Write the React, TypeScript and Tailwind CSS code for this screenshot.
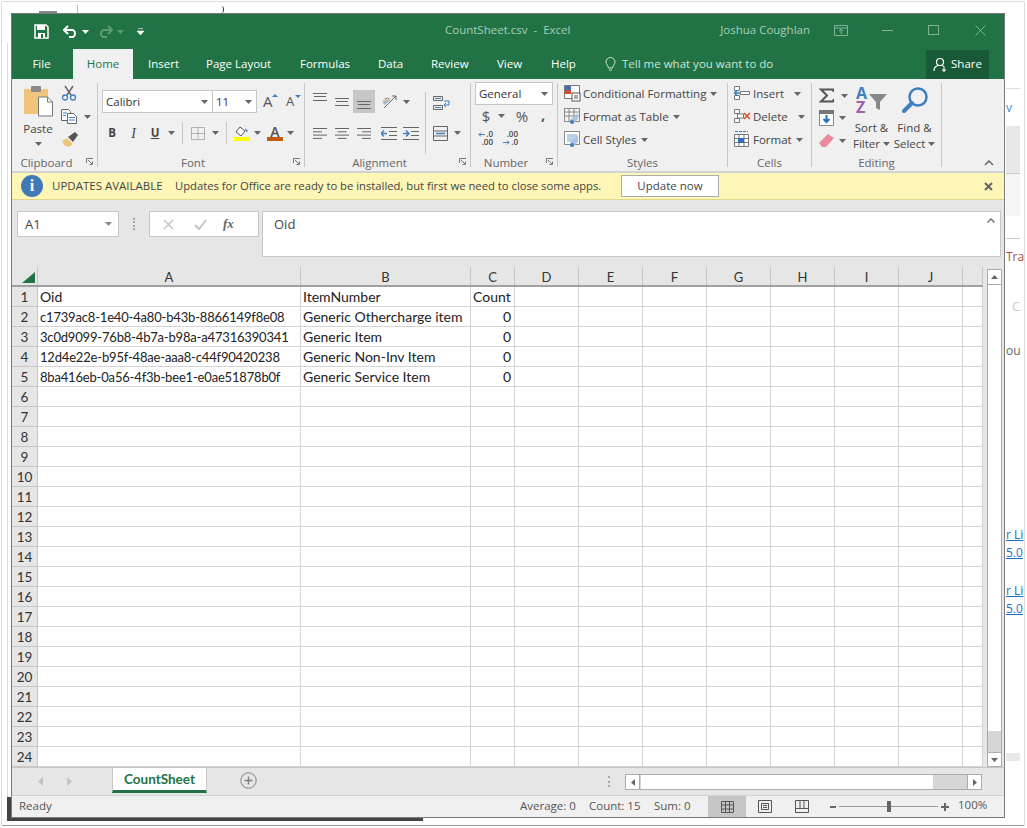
import type { ReactNode } from 'react'

const colWidths = [263, 170, 44, 64, 64, 64, 64, 64, 64, 64, 20]
const colNames = ['A', 'B', 'C', 'D', 'E', 'F', 'G', 'H', 'I', 'J', '']
const data = [
  ['Oid', 'ItemNumber', 'Count'],
  ['c1739ac8-1e40-4a80-b43b-8866149f8e08', 'Generic Othercharge item', '0'],
  ['3c0d9099-76b8-4b7a-b98a-a47316390341', 'Generic Item', '0'],
  ['12d4e22e-b95f-48ae-aaa8-c44f90420238', 'Generic Non-Inv Item', '0'],
  ['8ba416eb-0a56-4f3b-bee1-e0ae51878b0f', 'Generic Service Item', '0'],
]
const rows = Array.from({ length: 24 }, (_, i) => i + 1)

function Caret({ color = '#666', className = '' }: { color?: string; className?: string }) {
  return (
    <svg width="7" height="4" viewBox="0 0 7 4" className={className}>
      <path d="M0 0h7L3.5 4z" fill={color} />
    </svg>
  )
}

function Launcher() {
  return (
    <svg width="8" height="8" viewBox="0 0 8 8" className="shrink-0">
      <path d="M.5 5V.5H7M2 2l4 4M3.5 6.5h3v-3" fill="none" stroke="#777" />
    </svg>
  )
}

// three stacked lines for the vertical align buttons
function Lines() {
  return (
    <svg width="14" height="8" viewBox="0 0 14 8" className="block">
      <rect x="0" y="0" width="14" height="1" fill="#666" />
      <rect x="1" y="3" width="12" height="1" fill="#666" />
      <rect x="0" y="7" width="14" height="1" fill="#666" />
    </svg>
  )
}

function AlignH({ align }: { align: 'l' | 'c' | 'r' }) {
  const ws = [14, 9, 14, 9]
  return (
    <svg width="14" height="11" viewBox="0 0 14 11" className="block">
      {ws.map((w, i) => (
        <rect key={i} x={align === 'l' ? 0 : align === 'c' ? (14 - w) / 2 : 14 - w} y={i * 3.3} width={w} height="1" fill="#666" />
      ))}
    </svg>
  )
}

function SmallIcon({ children }: { children: ReactNode }) {
  return (
    <svg width="17" height="17" viewBox="0 0 17 17" className="shrink-0">
      {children}
    </svg>
  )
}

function StyleRow({ icon, label }: { icon: ReactNode; label: string }) {
  return (
    <div className="flex items-center h-[23px]">
      <div className="w-[19px]">{icon}</div>
      <span>{label}</span>
      <Caret className="ml-[4px]" />
    </div>
  )
}

function Group({ width, label, launcher, children }: { width: number; label: string; launcher?: boolean; children: ReactNode }) {
  return (
    <div className="flex flex-col h-[84px] border-r border-[#c6c6c6] shrink-0" style={{ width }}>
      <div className="h-[73px] flex">{children}</div>
      <div className={`h-[11px] relative flex items-center justify-center text-[11.5px] text-[#666] pt-[3px] ${launcher ? 'pr-[16px]' : ''}`}>
        {label}
        {launcher && (
          <span className="absolute right-[3px] top-[2px] flex">
            <Launcher />
          </span>
        )}
      </div>
    </div>
  )
}

function Ribbon() {
  return (
    <div className="h-[94px] bg-[#f0f0f0] border-b-2 border-[#d2d2d2] pt-[4px] flex text-[11.5px] text-[#444]">
      <Group width={86} label="Clipboard" launcher>
        <div className="w-[49px] flex flex-col items-center pl-[3px] pt-[3px]">
          <svg width="29" height="31" viewBox="0 0 29 31">
            <rect x="0" y="3" width="24" height="25" rx="1" fill="#efc57c" />
            <rect x="7" y="0" width="10" height="6" rx="1" fill="#8a8a8a" />
            <path d="M14.500 11h9l5 5v14h-14z" fill="#fff" stroke="#777" />
            <path d="M23.500 11v5h5" fill="none" stroke="#777" />
          </svg>
          <span className="mt-[4px] leading-[16px]">Paste</span>
          <Caret className="mt-[5px]" />
        </div>
        <div className="flex flex-col gap-[8px] pt-[2px]">
          <svg width="16" height="16" viewBox="0 0 16 16">
            <path d="M4 1l6 9M12 1L6 10" stroke="#666" strokeWidth="1.500" />
            <circle cx="4" cy="12.500" r="2.500" fill="none" stroke="#3f7fbf" strokeWidth="1.300" />
            <circle cx="12" cy="12.500" r="2.500" fill="none" stroke="#3f7fbf" strokeWidth="1.300" />
          </svg>
          <div className="flex items-center gap-[7px]">
            <svg width="16" height="15" viewBox="0 0 16 15">
              <path d="M.5.500h7l2 2v9h-9z" fill="#fff" stroke="#666" />
              <path d="M6.500 4.500h6l3 3v7h-9z" fill="#fff" stroke="#666" />
              <path d="M2 4h4M2 6.500h3M8 8.500h6M8 11h6" stroke="#3f7fbf" />
            </svg>
            <Caret />
          </div>
          <svg width="17" height="16" viewBox="0 0 17 16">
            <path d="M1 9l5-3 6 6-4 3-2-1-2 0z" fill="#efc57c" />
            <path d="M7 5l7-5 3 3-5 7z" fill="#555" />
          </svg>
        </div>
      </Group>

      <Group width={207} label="Font" launcher>
        <div className="pl-[4px] pt-[7px] flex flex-col">
          <div className="flex items-center h-[23px]">
            <div className="w-[111px] h-[23px] bg-white border border-[#c6c6c6] flex items-center justify-between px-[3px] text-[#333]">
              <span>Calibri</span>
              <Caret className="mr-[1px]" />
            </div>
            <div className="w-[44px] h-[23px] bg-white border border-l-0 border-[#c6c6c6] flex items-center justify-between px-[3px] text-[#333]">
              <span>11</span>
              <Caret className="mr-[1px]" />
            </div>
            <div className="relative ml-[6px] w-[14px] text-[15px] leading-none text-[#555] font-medium">
              A
              <svg width="6" height="3" viewBox="0 0 6 3" className="absolute -right-[1px] top-0">
                <path d="M0 3h6L3 0z" fill="#3f7fbf" />
              </svg>
            </div>
            <div className="relative ml-[9px] w-[14px] text-[13px] leading-none text-[#555] font-medium">
              A
              <svg width="6" height="3" viewBox="0 0 6 3" className="absolute -right-[1px] top-0">
                <path d="M0 0h6L3 3z" fill="#3f7fbf" />
              </svg>
            </div>
          </div>
          <div className="flex items-center h-[24px] mt-[8px]">
            <span className="w-[24px] ml-[-2px] text-center font-bold">B</span>
            <span className="w-[19px] text-center italic" style={{ fontFamily: '"Liberation Serif", serif', fontSize: 14 }}>I</span>
            <span className="w-[24px] text-center font-bold underline">U</span>
            <Caret className="ml-[1px]" />
            <div className="w-px h-[22px] bg-[#c6c6c6] ml-[7px]" />
            <svg width="14" height="13" viewBox="0 0 14 13" className="ml-[8px]">
              <path d="M.5.500h13v12h-13zM7 .500v12M.5 6.500h13" fill="none" stroke="#777" strokeDasharray="1 1" />
            </svg>
            <Caret className="ml-[7px]" />
            <div className="w-px h-[22px] bg-[#c6c6c6] ml-[7px]" />
            <div className="ml-[7px] flex flex-col items-center w-[16px]">
              <svg width="14" height="11" viewBox="0 0 14 11">
                <path d="M5 1l5 4-4 5-5-4z" fill="#fff" stroke="#555" />
                <path d="M10 2l3 3-2 1z" fill="#3f7fbf" />
              </svg>
              <div className="w-[16px] h-[4px] bg-[#ffff00]" />
            </div>
            <Caret className="ml-[4px]" />
            <div className="ml-[6px] flex flex-col items-center w-[16px]">
              <span className="text-[14px] leading-[11px] font-semibold text-[#555]">A</span>
              <div className="w-[16px] h-[4px] bg-[#c55a11]" />
            </div>
            <Caret className="ml-[4px]" />
          </div>
        </div>
      </Group>

      <Group width={166} label="Alignment" launcher>
        <div className="pl-[8px] pt-[7px] flex">
          <div className="flex flex-col">
            <div className="flex items-start h-[23px]">
              <div className="w-[22px] pt-[3px]"><Lines /></div>
              <div className="w-[18px] pt-[8px]"><Lines /></div>
              <div className="w-[22px] h-[23px] bg-[#c6c6c6] flex items-end justify-center pb-[4px]"><Lines /></div>
              <svg width="17" height="16" viewBox="0 0 17 16" className="ml-[6px] mt-[3px]">
                <text x="1" y="10" fontSize="7" fill="#555" transform="rotate(-40 5 8)">ab</text>
                <path d="M3 15L15 3M15 3h-4M15 3v4" fill="none" stroke="#666" />
              </svg>
              <Caret className="ml-[5px] mt-[10px]" />
            </div>
            <div className="flex items-center h-[24px] mt-[8px]">
              <div className="w-[22px]"><AlignH align="l" /></div>
              <div className="w-[22px]"><AlignH align="c" /></div>
              <div className="w-[24px]"><AlignH align="r" /></div>
              <svg width="16" height="13" viewBox="0 0 16 13">
                <path d="M0 .5h16M8 4.500h8M8 8.500h8M0 12.500h16" stroke="#666" />
                <path d="M6 6.500H0M3 3.500L0 6.500l3 3" fill="none" stroke="#3f7fbf" strokeWidth="1.500" />
              </svg>
              <svg width="16" height="13" viewBox="0 0 16 13" className="ml-[6px]">
                <path d="M0 .5h16M8 4.500h8M8 8.500h8M0 12.500h16" stroke="#666" />
                <path d="M0 6.500h6M3 3.500l3 3-3 3" fill="none" stroke="#3f7fbf" strokeWidth="1.500" />
              </svg>
            </div>
          </div>
          <div className="w-px h-[62px] bg-[#c6c6c6] ml-[6px] mt-[2px]" />
          <div className="flex flex-col pl-[7px]">
            <div className="h-[23px] flex items-center pt-[3px]">
              <svg width="17" height="16" viewBox="0 0 17 16">
                <path d="M.5 1.500h9v4h-9zM.5 10.500h9v4h-9z" fill="none" stroke="#666" />
                <path d="M2 3.500h6M2 12.500h6" stroke="#3f7fbf" />
                <path d="M11 6h5v4h-5M13 8l-2 2 2 2" fill="none" stroke="#3f7fbf" />
              </svg>
            </div>
            <div className="h-[24px] mt-[8px] flex items-center">
              <svg width="15" height="15" viewBox="0 0 15 15">
                <path d="M.5.500h14v14H.5zM.5 5h14M.5 10h14" fill="none" stroke="#666" />
                <path d="M3 7.500h9" stroke="#3f7fbf" strokeWidth="1.500" />
              </svg>
              <Caret className="ml-[6px]" />
            </div>
          </div>
        </div>
      </Group>

      <Group width={87} label="Number" launcher>
        <div className="pl-[4px] flex flex-col -mt-[1px]">
          <div className="w-[78px] h-[23px] bg-white border border-[#c6c6c6] flex items-center justify-between px-[3px] text-[#333]">
            <span>General</span>
            <Caret className="mr-[1px]" />
          </div>
          <div className="flex items-center h-[22px] text-[15px] text-[#555]">
            <span className="w-[10px] ml-[6px] text-center">$</span>
            <Caret className="ml-[7px]" />
            <span className="ml-[9px] w-[16px] text-center">%</span>
            <span className="ml-[11px] font-bold leading-[10px] h-[14px]">,</span>
          </div>
          <div className="flex items-center h-[22px] text-[8px] leading-[8px] text-[#444] font-semibold">
            <div className="ml-[3px] w-[15px] flex flex-col items-end">
              <div className="flex items-center gap-[1px]">
                <svg width="7" height="5" viewBox="0 0 7 5"><path d="M7 2.500H1M3 .5L1 2.500l2 2" fill="none" stroke="#3f7fbf" /></svg>
                <span>.0</span>
              </div>
              <span>.00</span>
            </div>
            <div className="ml-[10px] w-[15px] flex flex-col items-end">
              <span>.00</span>
              <div className="flex items-center gap-[1px]">
                <svg width="7" height="5" viewBox="0 0 7 5"><path d="M0 2.500h6M4 .5l2 2-2 2" fill="none" stroke="#3f7fbf" /></svg>
                <span>.0</span>
              </div>
            </div>
          </div>
        </div>
      </Group>

      <Group width={170} label="Styles">
        <div className="pl-[6px] flex flex-col -mt-[1px]">
          <StyleRow
            label="Conditional Formatting"
            icon={
              <SmallIcon>
                <path d="M.5.500h15v13H.5z" fill="#fff" stroke="#777" />
                <rect x="1" y="1" width="6" height="4" fill="#3f6fb5" />
                <rect x="1" y="5" width="6" height="4" fill="#d2502d" />
                <rect x="8" y="8" width="8" height="8" fill="#fff" stroke="#555" />
                <path d="M10 11h4M10 13h4" stroke="#555" />
              </SmallIcon>
            }
          />
          <StyleRow
            label="Format as Table"
            icon={
              <SmallIcon>
                <path d="M.5.500h15v13H.5zM.5 4h15M.5 8h15M5 .500v13M10 .500v13" fill="#f4f4f4" stroke="#888" />
                <path d="M6 12l8-7v6l-5 5z" fill="#a9c4e4" />
                <circle cx="8" cy="14" r="2" fill="#3f7fbf" />
              </SmallIcon>
            }
          />
          <StyleRow
            label="Cell Styles"
            icon={
              <SmallIcon>
                <path d="M.5.500h15v13H.5z" fill="#fff" stroke="#888" />
                <rect x="3" y="3" width="10" height="8" fill="#bcd0e8" />
                <path d="M6 12l8-8v7l-5 5z" fill="#a9c4e4" />
                <circle cx="8" cy="14" r="2" fill="#3f7fbf" />
              </SmallIcon>
            }
          />
        </div>
      </Group>

      <Group width={84} label="Cells">
        <div className="pl-[6px] flex flex-col -mt-[1px]">
          <div className="flex items-center h-[23px]">
            <div className="w-[19px]">
              <SmallIcon>
                <path d="M.5 1.500h5v4h-5zM.5 10.500h5v4h-5zM6.500 6.500h9v3h-9z" fill="#fff" stroke="#777" />
                <path d="M0 8h6M3 5.500L.5 8 3 10.500" fill="none" stroke="#3f7fbf" strokeWidth="1.300" />
              </SmallIcon>
            </div>
            <span>Insert</span>
            <Caret className="ml-[10px]" />
          </div>
          <div className="flex items-center h-[23px]">
            <div className="w-[19px]">
              <SmallIcon>
                <path d="M.5 1.500h5v4h-5zM.5 10.500h5v4h-5zM3.500 6h6v4h-6z" fill="#fff" stroke="#777" />
                <path d="M10 5l6 6M16 5l-6 6" stroke="#d2502d" strokeWidth="1.500" />
              </SmallIcon>
            </div>
            <span>Delete</span>
            <Caret className="ml-[10px]" />
          </div>
          <div className="flex items-center h-[23px]">
            <div className="w-[19px]">
              <SmallIcon>
                <path d="M1 .500h13" stroke="#3f7fbf" strokeDasharray="3 1" />
                <path d="M.5 3.500h14v12H.5zM.5 7.500h14M.5 11.500h14M5 3.500v12M10 3.500v12" fill="#fff" stroke="#777" />
                <rect x="4" y="7" width="6" height="5" fill="#2f6fb5" />
              </SmallIcon>
            </div>
            <span>Format</span>
            <Caret className="ml-[4px]" />
          </div>
        </div>
      </Group>

      <Group width={130} label="Editing">
        <div className="pl-[7px] flex">
          <div className="flex flex-col w-[36px]">
            <div className="flex items-center h-[23px] pt-[2px]">
              <svg width="15" height="15" viewBox="0 0 15 15">
                <path d="M14.500 4V1.500H2L8 7.500 2 13.500h12.500V11" fill="none" stroke="#555" strokeWidth="2" />
              </svg>
              <Caret className="ml-[7px]" />
            </div>
            <div className="flex items-center h-[23px]">
              <svg width="15" height="16" viewBox="0 0 15 16">
                <path d="M.5.500h14v15H.5z" fill="#fff" stroke="#888" />
                <rect x="0" y="0" width="15" height="4" fill="#777" />
                <path d="M7.500 5v7M4.500 9l3 3 3-3" fill="none" stroke="#2f6fb5" strokeWidth="2" />
              </svg>
              <Caret className="ml-[5px]" />
            </div>
            <div className="flex items-center h-[23px]">
              <svg width="15" height="13" viewBox="0 0 15 13">
                <path d="M0 9l9-9 6 4-8 9H3z" fill="#ea8a9c" />
              </svg>
              <Caret className="ml-[5px]" />
            </div>
          </div>
          <div className="flex flex-col items-center w-[33px] whitespace-nowrap">
            <div className="h-[32px] pt-[3px] flex items-start">
              <div className="flex flex-col text-[16px] font-bold leading-[14px] w-[13px]">
                <span className="text-[#3f7fbf]">A</span>
                <span className="text-[#9a62b3]">Z</span>
              </div>
              <svg width="18" height="17" viewBox="0 0 18 17" className="mt-[7px]">
                <path d="M0 1h18l-7 8v8l-4-2V9z" fill="#888" />
              </svg>
            </div>
            <span className="leading-[16px] mt-[5px]">Sort &amp;</span>
            <span className="leading-[16px] flex items-center">
              Filter
              <Caret className="ml-[3px]" />
            </span>
          </div>
          <div className="flex flex-col items-center w-[53px] whitespace-nowrap">
            <div className="h-[32px] pt-[3px]">
              <svg width="28" height="28" viewBox="0 0 28 28">
                <circle cx="17" cy="11" r="8.500" fill="none" stroke="#3f7fbf" strokeWidth="2.500" />
                <path d="M11 17L3 25" stroke="#3f7fbf" strokeWidth="4" strokeLinecap="round" />
              </svg>
            </div>
            <span className="leading-[16px] mt-[5px]">Find &amp;</span>
            <span className="leading-[16px] flex items-center">
              Select
              <Caret className="ml-[3px]" />
            </span>
          </div>
        </div>
      </Group>

      <div className="flex-1 flex justify-end items-end pr-[10px] pb-[5px]">
        <svg width="10" height="6" viewBox="0 0 10 6">
          <path d="M1 5l4-4 4 4" fill="none" stroke="#666" strokeWidth="1.500" />
        </svg>
      </div>
    </div>
  )
}

function Chrome() {
  const tabs: [string, number][] = [
    ['Insert', 58],
    ['Page Layout', 94],
    ['Formulas', 78],
    ['Data', 53],
    ['Review', 66],
    ['View', 54],
    ['Help', 54],
  ]
  return (
    <div className="bg-[#217346] text-white">
      <div className="h-[35px] flex items-center relative">
        <svg width="15" height="15" viewBox="0 0 15 15" className="ml-[22px]">
          <path d="M1 1h11l2 2v11H1z" fill="none" stroke="#fff" strokeWidth="1.500" />
          <path d="M3 1h8v5H3zM4 9h7v5H4z" fill="#fff" />
          <rect x="7" y="10" width="2" height="4" fill="#217346" />
        </svg>
        <svg width="15" height="13" viewBox="0 0 15 13" className="ml-[14px]">
          <path d="M1 5h9a4 4 0 010 7H6M5 1L1 5l4 4" fill="none" stroke="#fff" strokeWidth="2" />
        </svg>
        <Caret color="#fff" className="ml-[4px]" />
        <svg width="15" height="13" viewBox="0 0 15 13" className="ml-[9px]">
          <path d="M14 5H5a4 4 0 000 7h4M10 1l4 4-4 4" fill="none" stroke="#5d9b78" strokeWidth="2" />
        </svg>
        <Caret color="#5d9b78" className="ml-[4px]" />
        <svg width="7" height="7" viewBox="0 0 7 7" className="ml-[13px]">
          <path d="M1 .5h5M0 3h7L3.500 7z" fill="#fff" stroke="#fff" strokeWidth=".6" />
        </svg>
        <div className="absolute left-[433px] top-[8px] text-[11.5px] leading-[16px] text-[#a8cdb8] whitespace-pre">
          CountSheet.csv  -  Excel
        </div>
        <div className="ml-auto flex items-center text-[11.5px] text-[#a8cdb8] -mt-[3px]">
          <span>Joshua Coughlan</span>
          <svg width="14" height="11" viewBox="0 0 14 11" className="ml-[24px]">
            <path d="M.5.500h13v10H.5zM.5 3h13M7 9V4.500M5 6l2-2 2 2" fill="none" stroke="#7fb398" />
          </svg>
          <div className="ml-[34px] w-[11px] h-px bg-[#7fb398]" />
          <div className="ml-[35px] w-[11px] h-[10px] border border-[#7fb398]" />
          <svg width="11" height="11" viewBox="0 0 11 11" className="ml-[36px] mr-[18px]">
            <path d="M.5.500l10 10M10.500.500l-10 10" stroke="#7fb398" />
          </svg>
        </div>
      </div>
      <div className="h-[30px] flex items-center text-[11.5px]">
        <span className="w-[61px] text-center pr-[2px]">File</span>
        <span className="w-[60px] h-[30px] bg-[#f0f0f0] text-[#217346] flex items-center justify-center">Home</span>
        <div className="w-[15px]" />
        {tabs.map(([t, w]) => (
          <span key={t} className="shrink-0" style={{ width: w }}>{t}</span>
        ))}
        <svg width="11" height="15" viewBox="0 0 11 15" className="shrink-0">
          <path d="M3.500 11C3 8 1 7.500 1 5a4.500 4.500 0 019 0c0 2.500-2 3-2.500 6zM4 13h3" fill="none" stroke="#cfe3d7" />
        </svg>
        <span className="ml-[6px] text-[#cfe3d7]">Tell me what you want to do</span>
        <div className="ml-auto mr-[15px] w-[63px] h-[29px] bg-[#185a37] flex items-center justify-center gap-[3px]">
          <svg width="15" height="15" viewBox="0 0 15 15">
            <circle cx="7" cy="5" r="3.500" fill="none" stroke="#fff" strokeWidth="1.200" />
            <path d="M1 14c0-3 2-5 4-5.500M9 8.500c1 .3 2 1 2.500 2M11 11v4M9 13h4" fill="none" stroke="#fff" strokeWidth="1.200" />
          </svg>
          <span>Share</span>
        </div>
      </div>
    </div>
  )
}

function UpdateBar() {
  return (
    <div className="h-[27px] bg-[#fdf6b7] border-b border-[#dfd98d] flex items-center text-[11.5px] text-[#444] pl-[9px]">
      <div className="w-[22px] h-[22px] rounded-full bg-[#4079b5] flex items-center justify-center text-white text-[16px] font-bold" style={{ fontFamily: '"Liberation Serif", serif' }}>
        i
      </div>
      <span className="ml-[9px] w-[123px] font-medium whitespace-nowrap">UPDATES AVAILABLE</span>
      <span className="w-[446px] whitespace-nowrap text-[11.25px]">Updates for Office are ready to be installed, but first we need to close some apps.</span>
      <div className="w-[98px] h-[22px] bg-white border border-[#ababab] flex items-center justify-center">Update now</div>
      <svg width="9" height="9" viewBox="0 0 9 9" className="ml-auto mr-[11px]">
        <path d="M1 1l7 7M8 1L1 8" stroke="#666" strokeWidth="2" />
      </svg>
    </div>
  )
}

function FormulaBar() {
  return (
    <div className="h-[67px] bg-[#e6e6e6] flex items-start pt-[11px] pl-[5px] text-[#444]">
      <div className="w-[102px] h-[26px] bg-white border border-[#c6c6c6] flex items-center justify-between pl-[7px] pr-[6px] text-[13px]">
        <span className="pt-[2px]">A1</span>
        <Caret color="#888" />
      </div>
      <div className="w-[2px] h-[12px] ml-[14px] mt-[7px] border-l-2 border-dotted border-[#aaa]" />
      <div className="ml-[14px] w-[110px] h-[26px] bg-white border border-[#c6c6c6] flex items-center">
        <svg width="11" height="11" viewBox="0 0 11 11" className="ml-[13px]">
          <path d="M1 1l9 9M10 1l-9 9" stroke="#c4c4c4" strokeWidth="1.500" />
        </svg>
        <svg width="13" height="11" viewBox="0 0 13 11" className="ml-[20px]">
          <path d="M1 6l4 4 7-9" fill="none" stroke="#c4c4c4" strokeWidth="2" />
        </svg>
        <span className="ml-[16px] text-[13px] italic font-bold text-[#666]" style={{ fontFamily: '"Liberation Serif", serif' }}>fx</span>
      </div>
      <div className="ml-[3px] w-[739px] h-[46px] bg-white border border-[#c6c6c6] flex justify-between pl-[11px] pr-[4px] pt-[3px] text-[13px]">
        <span>Oid</span>
        <svg width="8" height="5" viewBox="0 0 8 5" className="mt-[3px] mr-[1px]">
          <path d="M.5 4.500L4 1l3.500 3.500" fill="none" stroke="#777" strokeWidth="1.500" />
        </svg>
      </div>
    </div>
  )
}

function Sheet() {
  const font = { fontFamily: 'Lato, sans-serif' }
  return (
    <div className="h-[500px] flex bg-[#e6e6e6]" style={font}>
      <div className="w-[971px] shrink-0">
        <div className="h-[20px] flex border-b-2 border-[#a0a0a0] text-[#333] text-[13px]">
          <div className="w-[26px] shrink-0 border-r border-[#c6c6c6] flex items-end justify-end pr-[2px] pb-[2px]">
            <svg width="13" height="11" viewBox="0 0 13 11">
              <path d="M13 0v11H0z" fill="#217346" />
            </svg>
          </div>
          {colNames.map((n, i) => (
            <div key={i} className="shrink-0 border-r border-[#c6c6c6] flex items-center justify-center pt-[4px]" style={{ width: colWidths[i] }}>
              {n}
            </div>
          ))}
        </div>
        {rows.map(r => (
          <div key={r} className="h-[20px] flex text-[14px] text-[#222]">
            <div className="w-[26px] shrink-0 bg-[#e6e6e6] border-r border-b border-[#c6c6c6] flex items-center justify-center text-[#333] text-[13.500px] pt-[1px]">
              {r}
            </div>
            {colWidths.map((w, c) => {
              const v = data[r - 1]?.[c]
              const hash = c === 0 && r > 1
              const num = c === 2 && r > 1
              return (
                <div
                  key={c}
                  className={`shrink-0 bg-white border-r border-b border-[#d4d4d4] flex items-center whitespace-nowrap pl-[2px] ${num ? 'justify-end pr-[3px]' : ''} ${hash ? 'text-[13px] tracking-[-0.18px] pt-[3px]' : ''}`}
                  style={{ width: w }}
                >
                  {v}
                </div>
              )
            })}
          </div>
        ))}
      </div>
      <div className="w-[21px] shrink-0 pl-[4px] pt-[2px]">
        <div className="w-[15px] h-[498px] flex flex-col border-x border-[#ababab]">
          <div className="h-[16px] bg-white border-y border-[#ababab] flex items-center justify-center">
            <svg width="7" height="4" viewBox="0 0 7 4"><path d="M0 4h7L3.500 0z" fill="#666" /></svg>
          </div>
          <div className="h-[446px] bg-white" />
          <div className="flex-1 bg-[#d6d6d6]" />
          <div className="h-[15px] bg-white border-y border-[#ababab] flex items-center justify-center">
            <Caret />
          </div>
        </div>
      </div>
    </div>
  )
}

function TabBar() {
  return (
    <div className="h-[28px] bg-[#e6e6e6] border-t border-[#c6c6c6] flex items-start">
      <svg width="6" height="9" viewBox="0 0 6 9" className="ml-[26px] mt-[9px]"><path d="M5 0v9L0 4.500z" fill="#c4c4c4" /></svg>
      <svg width="6" height="9" viewBox="0 0 6 9" className="ml-[22px] mt-[9px]"><path d="M1 0v9l5-4.500z" fill="#c4c4c4" /></svg>
      <div className="ml-[40px] w-[95px] h-[25px] bg-white border-x border-[#c6c6c6] border-b-[3px] border-b-[#217346] flex items-center justify-center text-[13.500px] font-bold text-[#217346]" style={{ fontFamily: 'Lato, sans-serif' }}>
        CountSheet
      </div>
      <svg width="17" height="17" viewBox="0 0 17 17" className="ml-[33px] mt-[4px]">
        <circle cx="8.500" cy="8.500" r="7.700" fill="none" stroke="#808080" />
        <path d="M4.500 8.500h8M8.500 4.500v8" stroke="#808080" strokeWidth="1.500" />
      </svg>
      <div className="ml-[351px] mt-[8px] w-[2px] h-[11px] border-l-2 border-dotted border-[#aaa]" />
      <div className="ml-[15px] mt-[6px] w-[357px] h-[16px] flex border border-[#ababab] bg-[#d6d6d6]">
        <div className="w-[14px] bg-white border-r border-[#ababab] flex items-center justify-center">
          <svg width="4" height="7" viewBox="0 0 4 7"><path d="M4 0v7L0 3.500z" fill="#666" /></svg>
        </div>
        <div className="w-[292px] bg-white ml-[1px]" />
        <div className="flex-1" />
        <div className="w-[14px] bg-white border-l border-[#ababab] flex items-center justify-center">
          <svg width="4" height="7" viewBox="0 0 4 7"><path d="M0 0v7l4-3.500z" fill="#666" /></svg>
        </div>
      </div>
    </div>
  )
}

function StatusBar() {
  return (
    <div className="h-[22px] bg-[#f0f0f0] border-t border-[#d2d2d2] flex items-center text-[11.500px] text-[#555]">
      <span className="ml-[7px] w-[501px] pb-[2px]">Ready</span>
      <span className="w-[69px] pb-[2px]">Average: 0</span>
      <span className="w-[65px] pb-[2px]">Count: 15</span>
      <span className="w-[54px] pb-[2px]">Sum: 0</span>
      <div className="w-[38px] h-[21px] bg-[#c6c6c6] flex items-center justify-center">
        <svg width="13" height="12" viewBox="0 0 13 12">
          <path d="M.5.500h12v11H.5zM4.500.500v11M8.500.500v11M.5 4h12M.5 8h12" fill="none" stroke="#555" />
        </svg>
      </div>
      <div className="w-[37px] flex justify-center">
        <svg width="14" height="13" viewBox="0 0 14 13">
          <path d="M.5.500h13v12H.5zM3.500 3.500h7v6h-7zM5 5.500h4M5 7.500h4" fill="none" stroke="#555" />
        </svg>
      </div>
      <div className="w-[38px] flex justify-center">
        <svg width="14" height="13" viewBox="0 0 14 13">
          <path d="M.5.500h13v12H.5zM.5 8.500h13M5 .500V8.500M9 .500v8" fill="none" stroke="#555" />
        </svg>
      </div>
      <div className="ml-[9px] w-[6px] h-[2px] bg-[#666]" />
      <div className="ml-[3px] w-[99px] h-px bg-[#999] relative">
        <div className="absolute left-[48px] -top-[5px] w-[4px] h-[11px] bg-[#666]" />
      </div>
      <svg width="8" height="8" viewBox="0 0 8 8" className="ml-[3px]">
        <path d="M0 4h8M4 0v8" stroke="#666" strokeWidth="2" />
      </svg>
      <span className="ml-[9px] pb-[3px]">100%</span>
    </div>
  )
}

export default function App() {
  return (
    <div className="relative w-[1027px] h-[828px] bg-white overflow-hidden pt-[13px] pl-[11px]" style={{ fontFamily: '"Open Sans", sans-serif' }}>
      {/* bits of the page behind the window */}
      <div className="absolute left-[1px] top-[1px] w-[1024px] h-[825px] border border-[#dcdcdc] border-b-[#9a9a9a] rounded-[2px]" />
      <div className="absolute left-[7px] top-[43px] w-px h-[754px] bg-[#ddd]" />
      <div className="absolute left-[39px] top-[11px] w-[18px] h-[2px] bg-[#888]" />
      <div className="absolute left-[77px] top-[5px] w-px h-[8px] bg-[#bbb]" />
      <div className="absolute left-[221px] top-[6px] w-[3px] h-[7px] border-r border-[#335] rounded-r-full" />
      <div className="absolute left-[7px] top-[797px] w-[5px] h-[24px] bg-[#444]" />
      <div className="absolute left-[7px] top-[818px] w-[416px] h-[3px] bg-[#444]" />
      <div className="absolute left-[1006px] top-[88px] w-[14px] h-px bg-[#ddd]" />
      <div className="absolute left-[1006px] top-[100px] text-[12px] leading-[16px] text-[#4a86d0]">v</div>
      <div className="absolute left-[1006px] top-[126px] w-[14px] h-[47px] bg-[#e8e8e8]" />
      <div className="absolute left-[1006px] top-[173px] w-[14px] h-[43px] bg-[#f5f5f5] border-t border-[#ccc]" />
      <div className="absolute left-[1006px] top-[238px] w-[14px] h-px bg-[#ccc]" />
      <div className="absolute left-[1006px] top-[249px] text-[12px] leading-[16px] text-[#a05050]">Tra</div>
      <div className="absolute left-[1012px] top-[298px] text-[13px] leading-[16px] text-[#ccc]">C</div>
      <div className="absolute left-[1006px] top-[343px] text-[12px] leading-[16px] text-[#666]">ou</div>
      <div className="absolute left-[1006px] top-[526px] text-[12px] text-[#1b6fc2] underline whitespace-nowrap leading-[18px]">r Li<br />5.0</div>
      <div className="absolute left-[1006px] top-[582px] text-[12px] text-[#1b6fc2] underline whitespace-nowrap leading-[18px]">r Li<br />5.0</div>
      <div className="absolute left-[1006px] top-[753px] w-[14px] h-[8px] bg-[#e8e8e8]" />

      <div className="relative w-[994px] h-[805px] bg-white border border-[#7b7b7b] flex flex-col">
        <Chrome />
        <Ribbon />
        <UpdateBar />
        <FormulaBar />
        <Sheet />
        <TabBar />
        <StatusBar />
      </div>
    </div>
  )
}
